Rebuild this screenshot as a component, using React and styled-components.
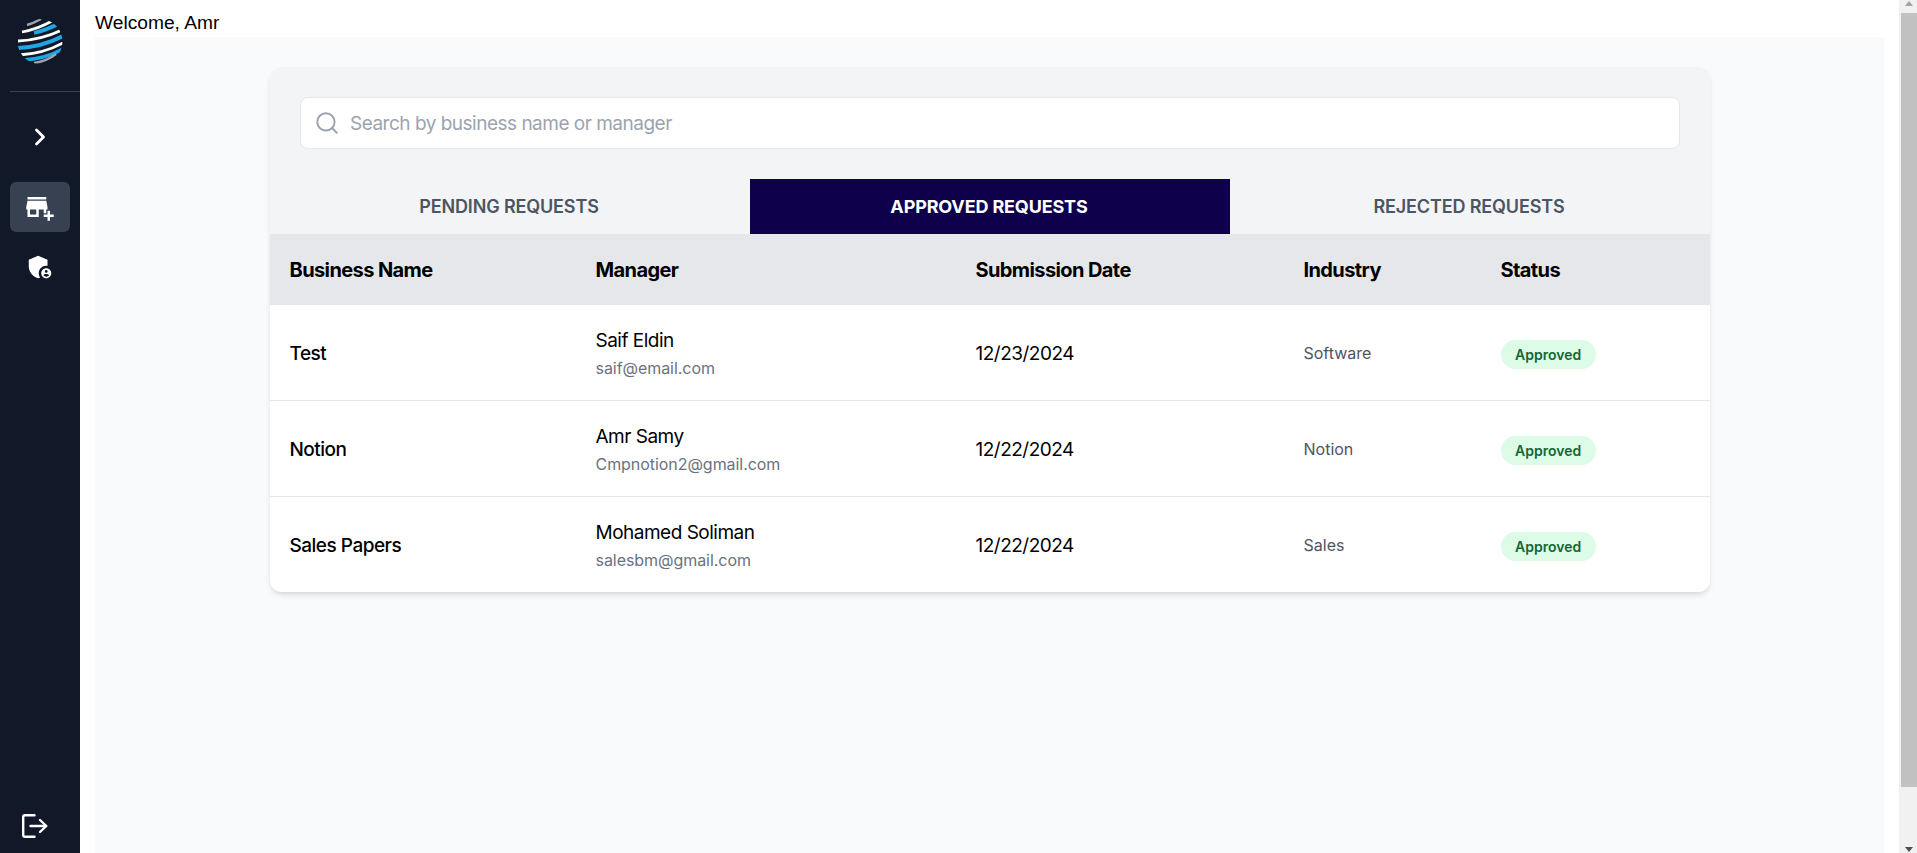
import React from "react";
import styled, { createGlobalStyle } from "styled-components";
import { ChevronRight, Search } from "lucide-react";
import { MdAddBusiness, MdAdminPanelSettings } from "react-icons/md";

const GlobalStyle = createGlobalStyle`
  html, body {
    margin: 0;
    height: 100%;
    overflow: hidden;
  }
  body {
    font-family: "Liberation Sans", Arial, sans-serif;
    background: #fff;
  }
  * {
    box-sizing: border-box;
  }
`;

const requests = [
  { id: 1, business: "Test", manager: "Saif Eldin", email: "saif@email.com", date: "12/23/2024", industry: "Software" },
  { id: 2, business: "Notion", manager: "Amr Samy", email: "Cmpnotion2@gmail.com", date: "12/22/2024", industry: "Notion" },
  { id: 3, business: "Sales Papers", manager: "Mohamed Soliman", email: "salesbm@gmail.com", date: "12/22/2024", industry: "Sales" },
];

function GlobeLogo() {
  return (
    <svg width="46" height="47" viewBox="0 0 46 47" fill="none">
      <defs>
        <clipPath id="globe">
          <circle cx="23" cy="23.5" r="22.5" />
        </clipPath>
      </defs>
      <g clipPath="url(#globe)">
        <path d="M10 7 Q17 5 24 1" stroke="#9ca3af" strokeWidth="2.4" />
        <path d="M5 14 Q21 11 35 3" stroke="#fff" strokeWidth="2.6" />
        <path d="M17 15 Q30 12 43 5" stroke="#1ea7e6" strokeWidth="3.8" />
        <path d="M1 23 Q24 22 45 12" stroke="#fff" strokeWidth="2.8" />
        <path d="M1 30 Q25 29 46 18" stroke="#1ea7e6" strokeWidth="4" />
        <path d="M2 37 Q26 36 46 25" stroke="#fff" strokeWidth="2.8" />
        <path d="M6 42 Q28 41 46 31" stroke="#1ea7e6" strokeWidth="3.6" />
        <path d="M17 45 Q30 43 39 36" stroke="#9ca3af" strokeWidth="2.4" />
      </g>
    </svg>
  );
}

function LogoutIcon() {
  return (
    <svg width="26" height="24" viewBox="0 0 26 24" fill="none" stroke="#fff" strokeWidth="2.4" strokeLinecap="round" strokeLinejoin="round">
      <path d="M12.5 1.2H3Q1.2 1.2 1.2 3V21Q1.2 22.8 3 22.8H12.5" />
      <path d="M8.5 12H24" />
      <path d="M18 6L24.3 12L18 18" />
    </svg>
  );
}

export default function App() {
  return (
    <Page>
      <GlobalStyle />
      <Sidebar>
        <LogoBox>
          <GlobeLogo />
        </LogoBox>
        <Divider />
        <ToggleButton>
          <ChevronRight size={28} strokeWidth={2.4} />
        </ToggleButton>
        <NavItem $active>
          <MdAddBusiness size={30} />
        </NavItem>
        <NavItem>
          <MdAdminPanelSettings size={30} />
        </NavItem>
        <LogoutButton>
          <LogoutIcon />
        </LogoutButton>
      </Sidebar>
      <Main>
        <Welcome>Welcome, Amr</Welcome>
        <Content>
          <Card>
            <SearchArea>
              <SearchBox>
                <Search size={26} strokeWidth={1.8} color="#9ca3af" />
                <SearchInput placeholder="Search by business name or manager" />
              </SearchBox>
            </SearchArea>
            <Tabs>
              <Tab>Pending Requests</Tab>
              <Tab $active>Approved Requests</Tab>
              <Tab>Rejected Requests</Tab>
            </Tabs>
            <Table>
              <colgroup>
                <col style={{ width: 306 }} />
                <col style={{ width: 380 }} />
                <col style={{ width: 328 }} />
                <col style={{ width: 197 }} />
                <col />
              </colgroup>
              <thead>
                <tr>
                  <HeadCell>Business Name</HeadCell>
                  <HeadCell>Manager</HeadCell>
                  <HeadCell>Submission Date</HeadCell>
                  <HeadCell>Industry</HeadCell>
                  <HeadCell>Status</HeadCell>
                </tr>
              </thead>
              <tbody>
                {requests.map((item) => (
                  <Row key={item.id}>
                    <BusinessCell>{item.business}</BusinessCell>
                    <Cell>
                      <ManagerName>{item.manager}</ManagerName>
                      <ManagerEmail>{item.email}</ManagerEmail>
                    </Cell>
                    <Cell>{item.date}</Cell>
                    <IndustryCell>{item.industry}</IndustryCell>
                    <Cell>
                      <StatusBadge>Approved</StatusBadge>
                    </Cell>
                  </Row>
                ))}
              </tbody>
            </Table>
          </Card>
        </Content>
      </Main>
      <ScrollTrack>
        <ArrowUp />
        <ScrollThumb />
        <ArrowDown />
      </ScrollTrack>
    </Page>
  );
}

const Page = styled.div`
  display: flex;
  width: 100%;
  height: 100vh;
  overflow: hidden;
`;

const Sidebar = styled.aside`
  width: 80px;
  flex-shrink: 0;
  background-color: #111827;
  color: #fff;
  display: flex;
  flex-direction: column;
  align-items: center;
`;

const LogoBox = styled.div`
  height: 91px;
  width: 100%;
  display: flex;
  align-items: flex-start;
  justify-content: center;
  padding-top: 18px;
`;

const Divider = styled.div`
  height: 1px;
  width: 70px;
  align-self: flex-end;
  background-color: #374151;
`;

const ToggleButton = styled.div`
  height: 90px;
  width: 100%;
  display: flex;
  align-items: center;
  justify-content: center;
`;

const NavItem = styled.div`
  width: 60px;
  height: 50px;
  margin-bottom: 10px;
  border-radius: 6px;
  display: flex;
  align-items: center;
  justify-content: center;
  background-color: ${(props) => (props.$active ? "#374151" : "transparent")};
`;

const LogoutButton = styled.div`
  margin-top: auto;
  margin-right: 10px;
  height: 54px;
  display: flex;
  align-items: center;
  justify-content: center;
`;

const Main = styled.main`
  flex: 1;
  min-width: 0;
  padding: 0 15px;
  display: flex;
  flex-direction: column;
`;

const Welcome = styled.div`
  height: 37px;
  padding-top: 11px;
  font-size: 19.2px;
  line-height: 23px;
  color: #000;
`;

const Content = styled.div`
  flex: 1;
  background-color: #f9fafb;
  padding-top: 30px;
  display: flex;
  justify-content: center;
`;

const Card = styled.section`
  width: 1440px;
  align-self: flex-start;
  margin-left: 1px;
  background-color: #f3f4f6;
  border-radius: 12px;
  overflow: hidden;
  box-shadow: 0 4px 6px -1px rgba(0, 0, 0, 0.1), 0 2px 4px -2px rgba(0, 0, 0, 0.1);
`;

const SearchArea = styled.div`
  padding: 30px 30px;
`;

const SearchBox = styled.div`
  height: 52px;
  background-color: #fff;
  border: 1px solid #e5e7eb;
  border-radius: 8px;
  padding: 0 13px;
  display: flex;
  align-items: center;
  gap: 10px;
`;

const SearchInput = styled.input`
  flex: 1;
  border: none;
  outline: none;
  padding: 0;
  background: transparent;
  font-family: Inter, sans-serif;
  font-size: 19px;
  letter-spacing: -0.5px;
  color: #111827;

  &::placeholder {
    color: #9ca3af;
    opacity: 1;
  }
`;

const Tabs = styled.div`
  display: grid;
  grid-template-columns: repeat(3, 1fr);
`;

const Tab = styled.div`
  height: 55px;
  padding-right: 2px;
  display: flex;
  align-items: center;
  justify-content: center;
  font-family: Inter, sans-serif;
  font-size: 18px;
  font-weight: ${(props) => (props.$active ? 700 : 600)};
  letter-spacing: -0.15px;
  text-transform: uppercase;
  color: ${(props) => (props.$active ? "#fff" : "#4b5563")};
  background-color: ${(props) => (props.$active ? "#0f004b" : "transparent")};
`;

const Table = styled.table`
  width: 100%;
  border-collapse: separate;
  border-spacing: 0;
  table-layout: fixed;
  background-color: #fff;
  font-family: Inter, sans-serif;
`;

const HeadCell = styled.th`
  height: 71px;
  padding: 1px 20px 0 19.5px;
  background-color: #e5e7eb;
  text-align: left;
  font-size: 20px;
  font-weight: 700;
  letter-spacing: -0.6px;
  color: #000;
`;

const Cell = styled.td`
  height: 96px;
  padding: 2px 20px 0 19.5px;
  border-bottom: 1px solid #e5e7eb;
  font-size: 19px;
  font-weight: 400;
  letter-spacing: -0.5px;
  color: #000;
`;

const Row = styled.tr`
  &:last-child ${Cell} {
    height: 95px;
    border-bottom: none;
  }
`;

const BusinessCell = styled(Cell)`
  font-weight: 500;
`;

const IndustryCell = styled(Cell)`
  padding-top: 0;
  font-size: 16px;
  letter-spacing: 0;
  color: #4b5563;
`;

const ManagerName = styled.div`
  line-height: 28px;
`;

const ManagerEmail = styled.div`
  margin-top: 1px;
  font-size: 16px;
  letter-spacing: -0.05px;
  line-height: 24px;
  color: #6b7280;
`;

const StatusBadge = styled.span`
  display: inline-flex;
  align-items: center;
  height: 29px;
  margin-top: 2px;
  padding: 0 14.5px;
  border-radius: 999px;
  background-color: #dcfce7;
  color: #166534;
  font-size: 14px;
  font-weight: 600;
  letter-spacing: 0;
`;

const ScrollTrack = styled.div`
  width: 18px;
  flex-shrink: 0;
  background-color: #f1f1f1;
  display: flex;
  flex-direction: column;
  align-items: center;
`;

const ScrollThumb = styled.div`
  width: 16px;
  height: 774px;
  margin-top: 7px;
  align-self: flex-end;
  background-color: #c1c1c1;
`;

const ArrowUp = styled.div`
  width: 0;
  height: 0;
  margin: 1px 0 0 1px;
  border-left: 4.5px solid transparent;
  border-right: 4.5px solid transparent;
  border-bottom: 5px solid #a3a3a3;
`;

const ArrowDown = styled.div`
  width: 0;
  height: 0;
  margin: auto 0 1px 1px;
  border-left: 4.5px solid transparent;
  border-right: 4.5px solid transparent;
  border-top: 5px solid #505050;
`;
